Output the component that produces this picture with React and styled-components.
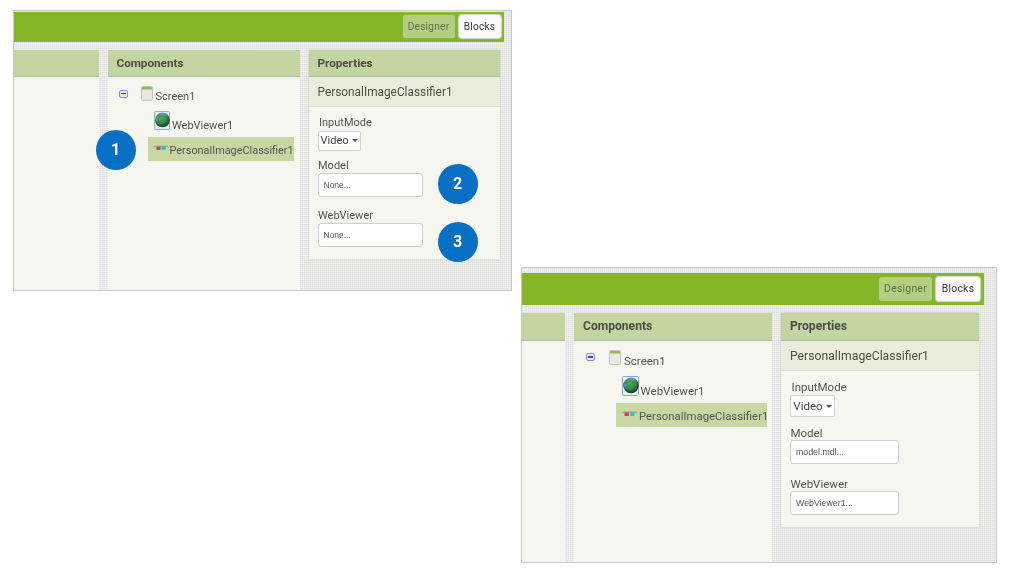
import React from "react";
import styled, { createGlobalStyle, ThemeProvider } from "styled-components";

const GlobalStyle = createGlobalStyle`
  html, body {
    margin: 0;
    background: #fff;
    font-family: Roboto, "Liberation Sans", sans-serif;
  }
`;

// the two screenshots are nearly the same but not the same scale
const smallShot = {
  id: "small",
  left: 13, top: 10, width: 499, height: 281,
  padTop: 0.5, barW: 490, barH: 30, barGap: 8,
  leftW: 84.5, midW: 192, propW: 191.5, gap: 9, headH: 27, propH: 209,
  rightPad: 3.5, btnH: 23, designerW: 52, blocksW: 42, btnTop: 3,
  font: 11, rowFont: 10.9, headFont: 11.7, nameFont: 11.85, small: 8.5,
  treeTop: 9.5, treeGaps: [10, 7], screenH: 15, globeW: 16, globeH: 19, rowH: 24,
  minusX: 11, screenX: 33, webX: 46, webGap: 2.5, rowX: 40, rowR: 6, glassW: 14, glassGap: 2,
  nameH: 30, propX: 10, modeTop: 8, selectW: 43, selectH: 20,
  inputW: 105, inputH: 24, labelH: 15, firstLabelH: 16, gaps: [7.5, 11],
};

const bigShot = {
  id: "big",
  left: 9, top: 267, width: 476, height: 296,
  padTop: 4.5, barW: 462, barH: 32, barGap: 8,
  leftW: 43, midW: 198, propW: 198, gap: 9, headH: 28, propH: 214,
  rightPad: 4, btnH: 24, designerW: 53, blocksW: 44, btnTop: 4,
  font: 11.5, rowFont: 11.35, headFont: 12.1, nameFont: 12.2, small: 8.8,
  treeTop: 9, treeGaps: [11, 7], screenH: 15, globeW: 17, globeH: 20, rowH: 24,
  minusX: 12, screenX: 35, webX: 48, webGap: 1.5, rowX: 42, rowR: 5, glassW: 15, glassGap: 2,
  nameH: 30, propX: 10, modeTop: 8, selectW: 45, selectH: 22,
  inputW: 109, inputH: 24.5, labelH: 15, firstLabelH: 16.5, gaps: [7.5, 11.5],
};

const pattern = `
  background-color: #e9e9e7;
  background-image:
    repeating-linear-gradient(0deg, rgba(255,255,255,.35) 0 1px, transparent 1px 2px),
    repeating-linear-gradient(90deg, rgba(190,190,190,.22) 0 1px, transparent 1px 2px);
`;

const Page = styled.div`
  display: flex;
  align-items: flex-start;
  width: 1018px;
  height: 578px;
  overflow: hidden;
  background: #fff;
`;

const Shot = styled.section`
  position: relative;
  flex: none;
  box-sizing: border-box;
  width: ${(p) => p.theme.width}px;
  height: ${(p) => p.theme.height}px;
  margin-left: ${(p) => p.theme.left}px;
  margin-top: ${(p) => p.theme.top}px;
  padding-top: ${(p) => p.theme.padTop}px;
  border: 1.5px solid #c9c9c6;
  overflow: hidden;
  filter: blur(0.35px);
  ${pattern}
`;

const TopBar = styled.header`
  display: flex;
  justify-content: flex-end;
  align-items: flex-start;
  gap: 4px;
  box-sizing: border-box;
  width: ${(p) => p.theme.barW}px;
  height: ${(p) => p.theme.barH}px;
  padding: ${(p) => p.theme.btnTop}px ${(p) => p.theme.rightPad}px 0 0;
  background: #85b627;
`;

const TabButton = styled.div`
  display: flex;
  align-items: center;
  justify-content: center;
  box-sizing: border-box;
  width: ${(p) => (p.$active ? p.theme.blocksW : p.theme.designerW)}px;
  height: ${(p) => p.theme.btnH}px;
  border-radius: 3px;
  font-size: ${(p) => p.theme.small + 1.6}px;
  font-weight: 400;
  letter-spacing: 0.25px;
  color: ${(p) => (p.$active ? "#3c3c3c" : "#5d6f49")};
  background: ${(p) => (p.$active ? "#fafafa" : "#b4cf82")};
  box-shadow: ${(p) => (p.$active ? "0 0 1px 1px #d9d9d9" : "0 0 1px #a5c46b")};
`;

const Columns = styled.div`
  display: flex;
  align-items: stretch;
  gap: ${(p) => p.theme.gap}px;
  height: 100%;
  margin-top: ${(p) => p.theme.barGap}px;
`;

const Panel = styled.div`
  flex: none;
  width: ${(p) => p.$w}px;
  height: ${(p) => (p.$h ? `${p.$h}px` : "auto")};
  background: #f5f6ef;
  box-shadow: ${(p) => (p.$h ? "0 0 2px #c4c4c0" : "none")};
`;

const PanelHead = styled.h2`
  display: flex;
  align-items: center;
  box-sizing: border-box;
  height: ${(p) => p.theme.headH}px;
  margin: 0;
  padding-left: 9px;
  font-size: ${(p) => p.theme.headFont}px;
  font-weight: 700;
  color: #4a4d45;
  background: #c5d5a1;
  border-bottom: 1px solid #b3bca0;
`;

const Tree = styled.div`
  padding-top: ${(p) => p.theme.treeTop}px;
`;

const TreeRow = styled.div`
  display: flex;
  align-items: flex-end;
  height: ${(p) => p.$h}px;
  margin-top: ${(p) => p.$top || 0}px;
  padding-left: ${(p) => p.$x}px;
  font-size: ${(p) => p.theme.font}px;
  color: #555;
`;

const SelectedRow = styled.div`
  display: flex;
  align-items: center;
  gap: ${(p) => p.theme.glassGap}px;
  box-sizing: border-box;
  height: ${(p) => p.theme.rowH}px;
  margin: ${(p) => p.theme.treeGaps[1]}px ${(p) => p.theme.rowR}px 0 ${(p) => p.theme.rowX}px;
  padding: 2px 0 0 6px;
  font-size: ${(p) => p.theme.rowFont}px;
  color: #555;
  white-space: nowrap;
  background: #c9d8a3;
`;

const Expander = styled.span`
  display: flex;
  align-items: center;
  justify-content: center;
  box-sizing: border-box;
  width: 9px;
  height: 8px;
  align-self: center;
  margin-right: ${(p) => p.theme.screenX - p.theme.minusX - 9}px;
  border: 1px solid #8d93c4;
  border-radius: 2px;
  background: #e2e4f2;

  &::before {
    content: "";
    width: 5px;
    height: 1.5px;
    background: #3f4a9a;
  }
`;

// the labels hang a little below their icons in the reference
const Label = styled.span`
  margin-left: ${(p) => p.$gap ?? 3}px;
  margin-bottom: ${(p) => p.$drop}px;
  line-height: 12px;
`;

const PropName = styled.div`
  display: flex;
  align-items: center;
  box-sizing: border-box;
  height: ${(p) => p.theme.nameH}px;
  padding: 1px 0 0 ${(p) => p.theme.propX - 1}px;
  font-size: ${(p) => p.theme.nameFont}px;
  color: #4f5148;
  background: #e9eddb;
  border-bottom: 1px solid #dedfd6;
`;

const PropBody = styled.div`
  padding: ${(p) => p.theme.modeTop}px 0 0 ${(p) => p.theme.propX - 1}px;
`;

const FieldLabel = styled.div`
  height: ${(p) => (p.$first ? p.theme.firstLabelH : p.theme.labelH)}px;
  margin-left: ${(p) => (p.$first ? 1.5 : 0.5)}px;
  margin-top: ${(p) => p.$top || 0}px;
  font-size: ${(p) => p.theme.font}px;
  line-height: ${(p) => p.theme.labelH + 1.5}px;
  color: #555;
`;

const Select = styled.div`
  display: flex;
  align-items: center;
  justify-content: center;
  gap: 3px;
  box-sizing: border-box;
  width: ${(p) => p.theme.selectW}px;
  height: ${(p) => p.theme.selectH}px;
  border: 1px solid #d2d2ce;
  border-radius: 2px;
  font-size: ${(p) => p.theme.font}px;
  color: #444;
  background: #fff;

  &::after {
    content: "";
    border-left: 3px solid transparent;
    border-right: 3px solid transparent;
    border-top: 3px solid #555;
  }
`;

const TextInput = styled.div`
  display: flex;
  align-items: center;
  box-sizing: border-box;
  width: ${(p) => p.theme.inputW}px;
  height: ${(p) => p.theme.inputH}px;
  padding-left: 5px;
  border: 1px solid #cfcfcb;
  border-radius: 3px;
  font-family: "Liberation Sans", Arial, sans-serif;
  font-size: ${(p) => p.theme.small}px;
  color: #555;
  background: #fff;
`;

const Badge = styled.div`
  position: absolute;
  left: ${(p) => p.$x - 20}px;
  top: ${(p) => p.$y - 20}px;
  display: flex;
  align-items: center;
  justify-content: center;
  width: 40px;
  height: 40px;
  border-radius: 50%;
  font-size: 16px;
  font-weight: 700;
  color: #fff;
  background: #0770c4;
`;

const IconBox = styled.svg`
  flex: none;
  display: block;
`;

const GlassesBox = styled(IconBox)`
  align-self: flex-start;
  margin-top: 6px;
`;

const ScreenIcon = () => (
  <IconBox width="12" height="15" viewBox="0 0 12 15">
    <rect x="0.5" y="0.5" width="11" height="14" rx="1.5" fill="#e8e9e3" stroke="#c4c4c0" />
    <path d="M1 2a1 1 0 0 1 1-1h8a1 1 0 0 1 1 1v1.500H1z" fill="#9ab94c" />
  </IconBox>
);

const GlobeIcon = ({ id, width, height }) => (
  <IconBox width={width} height={height} viewBox="0 0 17 20">
    <defs>
      <radialGradient id={`sphere-${id}`} cx="0.42" cy="0.32" r="0.72">
        <stop offset="0" stopColor="#5aa84a" />
        <stop offset="0.55" stopColor="#2f8a48" />
        <stop offset="0.85" stopColor="#1c4a30" />
        <stop offset="1" stopColor="#141c16" />
      </radialGradient>
    </defs>
    <rect x="0.5" y="0.5" width="16" height="19" rx="1" fill="#e6edf5" stroke="#86a6cb" />
    <circle cx="9" cy="9.500" r="7.800" fill={`url(#sphere-${id})`} />
    <path d="M5 3.300C6.300 2.300 8 1.700 9.500 1.800c2 .1 3.600 1 4.800 2.300-1.300.9-2.700.5-3.900 1.200-1.500-1-3.500-1.300-5.400-2z" fill="#4f97cf" />
    <path d="M1.600 9c.6-1.200 1.700-1.600 2.600-1 .6.800.2 2-.8 2.500-.7.300-1.300 0-1.800-1.500z" fill="#4f97cf" />
  </IconBox>
);

const GlassesIcon = ({ width }) => (
  <GlassesBox width={width} height="7" viewBox="0 0 15 7">
    <path d="M0 1.200h15" stroke="#8a8f8a" strokeWidth="1" />
    <rect x="2.500" y="1.500" width="4.500" height="3.500" rx="1" fill="#e23a55" />
    <rect x="8" y="1.500" width="4.500" height="3.500" rx="1" fill="#2fc0cc" />
  </GlassesBox>
);

function ScreenShot({ metrics, modelValue, viewerValue, children }) {
  return (
    <ThemeProvider theme={metrics}>
      <Shot>
        <TopBar>
          <TabButton>Designer</TabButton>
          <TabButton $active>Blocks</TabButton>
        </TopBar>
        <Columns>
          <Panel $w={metrics.leftW}>
            <PanelHead />
          </Panel>
          <Panel $w={metrics.midW}>
            <PanelHead>Components</PanelHead>
            <Tree>
              <TreeRow $h={metrics.screenH} $x={metrics.minusX}>
                <Expander />
                <ScreenIcon />
                <Label $drop={-2}>Screen1</Label>
              </TreeRow>
              <TreeRow $h={metrics.globeH} $top={metrics.treeGaps[0]} $x={metrics.webX}>
                <GlobeIcon id={metrics.id} width={metrics.globeW} height={metrics.globeH} />
                <Label $gap={metrics.webGap} $drop={-1.5}>WebViewer1</Label>
              </TreeRow>
              <SelectedRow>
                <GlassesIcon width={metrics.glassW} />
                PersonalImageClassifier1
              </SelectedRow>
            </Tree>
          </Panel>
          <Panel $w={metrics.propW} $h={metrics.propH}>
            <PanelHead>Properties</PanelHead>
            <PropName>PersonalImageClassifier1</PropName>
            <PropBody>
              <FieldLabel $first>InputMode</FieldLabel>
              <Select>Video</Select>
              <FieldLabel $top={metrics.gaps[0]}>Model</FieldLabel>
              <TextInput>{modelValue}</TextInput>
              <FieldLabel $top={metrics.gaps[1]}>WebViewer</FieldLabel>
              <TextInput>{viewerValue}</TextInput>
            </PropBody>
          </Panel>
        </Columns>
        {children}
      </Shot>
    </ThemeProvider>
  );
}

export default function App() {
  return (
    <Page>
      <GlobalStyle />
      <ScreenShot metrics={smallShot} modelValue="None..." viewerValue="None...">
        <Badge $x={101.5} $y={138.5}>1</Badge>
        <Badge $x={443.5} $y={172.5}>2</Badge>
        <Badge $x={443.5} $y={230.5}>3</Badge>
      </ScreenShot>
      <ScreenShot metrics={bigShot} modelValue="model.mdl..." viewerValue="WebViewer1..." />
    </Page>
  );
}
